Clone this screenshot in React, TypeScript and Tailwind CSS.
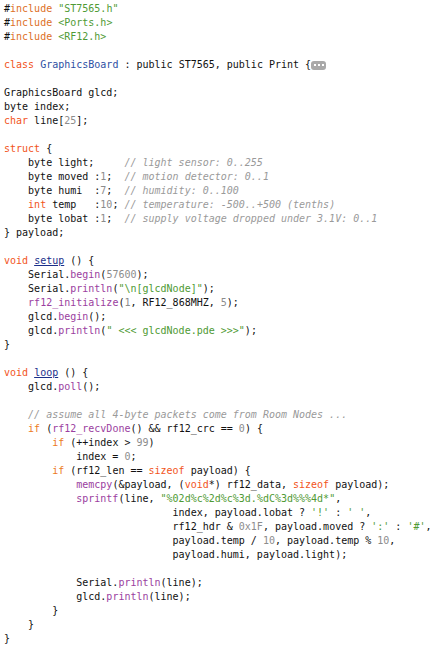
import React from "react";

type Seg = [string, string];

const tone: Record<string, string> = {
  "": "",
  k: "text-[#f2541b]",
  p: "text-[#dd6f1f]",
  i: "text-[#ec7a22]",
  s: "text-[#4f9a34]",
  n: "text-[#8c8c8c]",
  m: "text-[#9a9a9a] italic",
  f: "text-[#9b3ea0]",
  t: "text-[#2d4fa3]",
  u: "text-[#1b2f8a] underline",
};

const pad = (n: number) => " ".repeat(n);

const lines: (Seg[] | "fold")[] = [
  [["", "#"], ["p", "include"], ["", " "], ["s", '"ST7565.h"']],
  [["", "#"], ["p", "include"], ["", " "], ["s", "<Ports.h>"]],
  [["", "#"], ["p", "include"], ["", " "], ["s", "<RF12.h>"]],
  [],
  "fold",
  [],
  [["", "GraphicsBoard glcd;"]],
  [["", "byte index;"]],
  [["k", "char"], ["", " line["], ["n", "25"], ["", "];"]],
  [],
  [["k", "struct"], ["", " {"]],
  [["", "    byte light;     "], ["m", "// light sensor: 0..255"]],
  [["", "    byte moved :"], ["n", "1"], ["", ";  "], ["m", "// motion detector: 0..1"]],
  [["", "    byte humi  :"], ["n", "7"], ["", ";  "], ["m", "// humidity: 0..100"]],
  [["", "    "], ["k", "int"], ["", " temp   :"], ["n", "10"], ["", "; "], ["m", "// temperature: -500..+500 (tenths)"]],
  [["", "    byte lobat :"], ["n", "1"], ["", ";  "], ["m", "// supply voltage dropped under 3.1V: 0..1"]],
  [["", "} payload;"]],
  [],
  [["k", "void"], ["", " "], ["u", "setup"], ["", " () {"]],
  [["", "    Serial."], ["f", "begin"], ["", "("], ["n", "57600"], ["", ");"]],
  [["", "    Serial."], ["f", "println"], ["", "("], ["s", '"\\n[glcdNode]"'], ["", ");"]],
  [["", "    "], ["f", "rf12_initialize"], ["", "("], ["n", "1"], ["", ", RF12_868MHZ, "], ["n", "5"], ["", ");"]],
  [["", "    glcd."], ["f", "begin"], ["", "();"]],
  [["", "    glcd."], ["f", "println"], ["", "("], ["s", '" <<< glcdNode.pde >>>"'], ["", ");"]],
  [["", "}"]],
  [],
  [["k", "void"], ["", " "], ["u", "loop"], ["", " () {"]],
  [["", "    glcd."], ["f", "poll"], ["", "();"]],
  [],
  [["", "    "], ["m", "// assume all 4-byte packets come from Room Nodes ..."]],
  [["", "    "], ["i", "if"], ["", " ("], ["f", "rf12_recvDone"], ["", "() && rf12_crc == "], ["n", "0"], ["", ") {"]],
  [["", "        "], ["i", "if"], ["", " (++index > "], ["n", "99"], ["", ")"]],
  [["", "            index = "], ["n", "0"], ["", ";"]],
  [["", "        "], ["i", "if"], ["", " (rf12_len == "], ["k", "sizeof"], ["", " payload) {"]],
  [["", "            "], ["f", "memcpy"], ["", "(&payload, ("], ["k", "void"], ["", "*) rf12_data, "], ["k", "sizeof"], ["", " payload);"]],
  [["", "            "], ["f", "sprintf"], ["", "(line, "], ["s", '"%02d%c%2d%c%3d.%dC%3d%%%4d*"'], ["", ","]],
  [["", pad(28) + "index, payload.lobat ? "], ["s", "'!'"], ["", " : "], ["s", "' '"], ["", ","]],
  [["", pad(28) + "rf12_hdr & "], ["n", "0x1F"], ["", ", payload.moved ? "], ["s", "':'"], ["", " : "], ["s", "'#'"], ["", ","]],
  [["", pad(28) + "payload.temp / "], ["n", "10"], ["", ", payload.temp % "], ["n", "10"], ["", ","]],
  [["", pad(28) + "payload.humi, payload.light);"]],
  [],
  [["", "            Serial."], ["f", "println"], ["", "(line);"]],
  [["", "            glcd."], ["f", "println"], ["", "(line);"]],
  [["", "        }"]],
  [["", "    }"]],
  [["", "}"]],
];

const FoldLine = () => (
  <div className="flex items-center h-[14px]">
    <span>
      <span className={tone.k}>class</span> <span className={tone.t}>GraphicsBoard</span> : public ST7565, public Print {"{"}
    </span>
    <span className="flex items-center justify-center gap-[2px] w-[15px] h-[9px] rounded-[3px] bg-[#a9a9a9]">
      <span className="w-[2px] h-[2px] bg-white" />
      <span className="w-[2px] h-[2px] bg-white" />
      <span className="w-[2px] h-[2px] bg-white" />
    </span>
  </div>
);

const App = () => {
  return (
    <div className="w-[434px] h-[646px] bg-white overflow-hidden">
      <div
        className="flex flex-col pt-[2px] pl-[4px] text-[10px] leading-[14px] text-[#111] whitespace-pre"
        style={{ fontFamily: '"DejaVu Sans Mono", monospace' }}
      >
        {lines.map((line, idx) =>
          line === "fold" ? (
            <FoldLine key={idx} />
          ) : (
            <div key={idx} className="h-[14px]">
              {line.map(([t, text], j) => (
                <span key={j} className={tone[t]}>
                  {text}
                </span>
              ))}
            </div>
          )
        )}
      </div>
    </div>
  );
};

export default App;
